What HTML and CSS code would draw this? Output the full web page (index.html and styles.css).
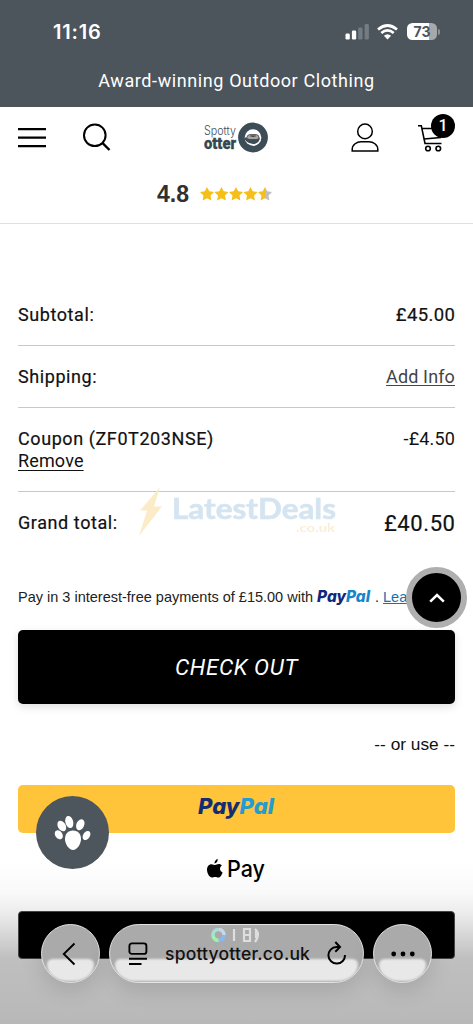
FILE: index.html
```html
<!DOCTYPE html>
<html lang="en">
<head>
<meta charset="utf-8">
<meta name="viewport" content="width=device-width, initial-scale=1">
<title>Spotty Otter - Cart</title>
<link rel="stylesheet" href="styles.css">
</head>
<body>
<div class="screen">
  <div class="status">
    <span class="clock">11:16</span>
    <div class="indicators">
      <svg width="25" height="16" viewBox="0 0 25 16"><g fill="#fff"><rect x="1.500" y="9.500" width="4.3" height="6" rx="1.3"/><rect x="7.900" y="6.500" width="4.3" height="9" rx="1.3"/></g><g fill="#747b82"><rect x="14.200" y="3.500" width="4.3" height="12" rx="1.3"/><rect x="20.600" y="0" width="4.3" height="15.500" rx="1.3"/></g></svg>
      <svg width="21" height="16" viewBox="0 0 21 16" fill="none" stroke="#fff" stroke-width="2.7"><path d="M1 5.5Q10.500-2.500 20 5.500M4.300 9Q10.500 3.800 16.700 9"/><path d="M10.500 15.500L6.900 11.800Q10.500 8.700 14.100 11.800Z" fill="#fff" stroke="none"/></svg>
      <div class="battery"><span>73</span></div>
      <i class="battery-cap"></i>
    </div>
  </div>
  <div class="promo">Award-winning Outdoor Clothing</div>
  <header class="header">
    <nav class="nav">
      <svg class="menu" width="28" height="22" viewBox="0 0 28 22" stroke="#000" stroke-width="2.300"><path d="M0 2.200H28M0 10.700H28M0 19.200H28"/></svg>
      <svg class="search" width="30" height="30" viewBox="0 0 30 30" fill="none" stroke="#000" stroke-width="2"><circle cx="12.800" cy="12.300" r="10.800"/><path d="M20.100 19.700L27.500 27" stroke-width="2.400"/></svg>
      <svg class="logo" width="66" height="34" viewBox="0 0 66 34">
        <text class="logo-thin" x="1" y="13.500" textLength="32" lengthAdjust="spacingAndGlyphs">Spotty</text>
        <text class="logo-bold" x="1" y="28" textLength="32" lengthAdjust="spacingAndGlyphs">otter</text>
        <circle cx="50" cy="16.500" r="14.900" fill="#3d4d58"/>
        <circle cx="50" cy="16.500" r="8.300" fill="#fff"/>
        <path d="M41.500 16.500L58 17Q57 22 52 23.500L46 22Q42 20 41.500 16.500Z" fill="#3d4d58"/>
        <path d="M43.500 17.500Q44 13.500 47 13.500H53Q56 13.500 56.300 17.500Q54 19 50 18.500Q46 19 43.500 17.500Z" fill="#aaa69e" stroke="#303a40" stroke-width=".7"/>
        <path d="M47 15H53M49.300 14.500L50 16L51 14.500" stroke="#293238" stroke-width=".8" fill="none"/>
        <path d="M57.600 17Q57 22.500 50 24.300" stroke="#fff" stroke-width="1.300" fill="none"/>
      </svg>
      <svg class="account" width="28" height="30" viewBox="0 0 28 30" fill="none" stroke="#000" stroke-width="1.500"><circle cx="14" cy="8.400" r="7.300"/><path d="M1.200 28V26.500C1.200 21.500 6 18.700 10 18.700H18C22 18.700 26.800 21.500 26.800 26.500V28Z"/></svg>
      <div class="cart">
        <svg width="28" height="30" viewBox="0 0 28 30" fill="none" stroke="#000" stroke-width="1.600"><path d="M0 2.700H3.300L7 20.500H23.500M4.400 5.500H25L22.500 14.500L6 16"/><circle cx="10" cy="25.500" r="2.300"/><circle cx="20.300" cy="25.500" r="2.300"/></svg>
        <span class="badge">1</span>
      </div>
    </nav>
    <div class="rating">
      <b>4.8</b>
      <svg width="72" height="14" viewBox="0 0 72 14">
        <defs><path id="star" d="M7 0L9.200 4.300L14 5L10.500 8.500L11.400 13.500L7 11.200L2.600 13.500L3.500 8.500L0 5L4.800 4.300Z"/><linearGradient id="half"><stop offset=".5" stop-color="#f5be18"/><stop offset=".5" stop-color="#bfbfc2"/></linearGradient></defs>
        <g fill="#f5be18"><use href="#star"/><use href="#star" x="14.500"/><use href="#star" x="29"/><use href="#star" x="43.500"/></g><use href="#star" x="58" fill="url(#half)"/>
      </svg>
    </div>
  </header>
  <main class="main">
    <div class="row"><span class="label">Subtotal:</span><span class="value">£45.00</span></div>
    <div class="row"><span class="label">Shipping:</span><a class="add">Add Info</a></div>
    <div class="row coupon"><div><span class="label">Coupon (ZF0T203NSE)</span><a class="remove">Remove</a></div><span class="discount">-£4.50</span></div>
    <div class="row total"><span class="label">Grand total:</span><span class="sum">£40.50</span></div>
    <p class="paylater"><span>Pay in 3 interest-free payments of £15.00 with</span>
      <svg class="pp-small" width="54" height="20" viewBox="0 0 54 20"><text class="pp" x="0" y="15" font-size="15.500" textLength="53" lengthAdjust="spacingAndGlyphs"><tspan fill="#10277c">Pay</tspan><tspan fill="#1685cc">Pal</tspan></text></svg>
      <span>.</span><a>Learn</a></p>
    <button class="checkout">CHECK OUT</button>
    <div class="or">-- or use --</div>
    <button class="paypal"><svg width="78" height="30" viewBox="0 0 78 30"><text class="pp" x="0" y="21" font-size="21.500" textLength="76" lengthAdjust="spacingAndGlyphs"><tspan fill="#142c71">Pay</tspan><tspan fill="#259bd0">Pal</tspan></text></svg></button>
    <div class="applepay">
      <svg width="16" height="20" viewBox="0 0 16 20"><path d="M10.700 0C11 2.100 9.500 4.300 7.500 4.500C7.200 2.400 8.900.5 10.700 0ZM14.900 6.600C12.100 8.400 12.500 12.200 15.600 13.400C14.800 15.800 13.200 18.600 11.300 18.600C10.200 18.600 9.700 17.900 8.200 17.900C6.700 17.900 6.100 18.600 5 18.600C2.500 18.600 0 14.400 0 10.800C0 7.300 2.100 5.200 4.500 5.200C6 5.200 7.100 6.100 8.100 6.100C9 6.100 10.200 5.100 12 5.100C13.200 5.100 14.200 5.700 14.900 6.600Z"/></svg>
      <svg width="39" height="32" viewBox="0 0 39 32"><text class="pay" x="0" y="24" textLength="38" lengthAdjust="spacingAndGlyphs">Pay</text></svg>
    </div>
    <div class="gpay"></div>
  </main>

  <svg class="watermark" width="204" height="56" viewBox="0 0 204 56"><path d="M24 1L4 24.500H11L3 50L26 20.500H18Z" fill="#fbeac0"/><text class="wm-name" x="36" y="33" textLength="164" lengthAdjust="spacingAndGlyphs">LatestDeals</text><text class="wm-tld" x="160" y="46" textLength="39" lengthAdjust="spacingAndGlyphs">.co.uk</text></svg>
  <div class="totop"><svg width="16" height="10" viewBox="0 0 16 10" fill="none" stroke="#fff" stroke-width="2.500"><path d="M1.200 8.700L8 2L14.800 8.700"/></svg></div>
  <div class="paw"><svg width="38" height="36" viewBox="0 0 38 36" fill="#fff"><path d="M19 15.500C24 15.500 27 19 27 24C27 29 23 35 19 35C15 35 11 29 11 24C11 19 14 15.500 19 15.500Z"/><ellipse cx="4.800" cy="19.800" rx="3.600" ry="4.900" transform="rotate(-35 4.800 19.800)"/><ellipse cx="7.800" cy="11" rx="3.900" ry="5.700" transform="rotate(-30 7.800 11)"/><ellipse cx="15.300" cy="7" rx="3.900" ry="6.200" transform="rotate(-15 15.300 7)"/><ellipse cx="26.300" cy="9.700" rx="3.900" ry="5.700" transform="rotate(24 26.300 9.700)"/><ellipse cx="32.500" cy="20.500" rx="3.400" ry="5" transform="rotate(32 32.500 20.500)"/></svg></div>

  <div class="shade"></div>
  <div class="toolbar">
    <div class="glass round"><svg width="14" height="24" viewBox="0 0 14 24" fill="none" stroke="#000" stroke-width="1.900"><path d="M12.500 1.500L1.800 12L12.500 22.500"/></svg></div>
    <div class="glass pill">
      <svg class="reader" width="20" height="24" viewBox="0 0 20 24" fill="none" stroke="#000" stroke-width="1.900"><rect x="1.400" y="1.400" width="17" height="10.500" rx="2.500"/><path d="M1 16.800H19M1 22H13.500"/></svg>
      <span class="url">spottyotter.co.uk</span>
      <svg class="reload" width="20" height="24" viewBox="0 0 20 24" fill="none" stroke="#000" stroke-width="2"><path d="M12.500 6H9.500A8.300 8.300 0 1 0 18 14M8.300 1L13 6L8.300 10.700"/></svg>
      <svg class="gmark" width="54" height="20" viewBox="0 0 54 20"><g fill="none" stroke-width="3.600"><path d="M4 10A5.500 5.500 0 0 1 9.500 4.500" stroke="#a2e3d6"/><path d="M9.500 4.500A5.500 5.500 0 0 1 15 10" stroke="#c9d7ea"/><path d="M15 10A5.500 5.500 0 0 1 9.500 15.500" stroke="#8ab8f2"/><path d="M9.500 15.500A5.500 5.500 0 0 1 4 10" stroke="#a3efb0"/></g><g fill="none" stroke="#dedede" stroke-width="2.200"><path d="M25 4V16M35 4H41V16H35ZM35 10H41M46 4Q52 9 46 17M47 4V13"/></g></svg>
    </div>
    <div class="glass round"><svg width="24" height="6" viewBox="0 0 24 6"><circle cx="2.700" cy="3" r="2.400"/><circle cx="12" cy="3" r="2.400"/><circle cx="21.300" cy="3" r="2.400"/></svg></div>
  </div>
</div>
</body>
</html>
```
FILE: styles.css
```css
* { box-sizing: border-box; }
body { margin: 0; background: #fff; color: #111; font-family: Roboto, "Liberation Sans", sans-serif; }
button { border: 0; padding: 0; font: inherit; display: flex; align-items: center; justify-content: center; width: 100%; }
svg { display: block; flex: none; overflow: visible; }
.screen { position: relative; width: 473px; height: 1024px; overflow: hidden; }

.status { height: 57px; background: #4d555c; display: flex; justify-content: space-between; padding: 6px 33px 0 53px; align-items: center; color: #fff; }
.clock { font: 600 20px/24px Inter, sans-serif; letter-spacing: .8px; }
.indicators { display: flex; align-items: center; }
.indicators svg + svg { margin-left: 8px; }
.battery { margin-left: 9px; width: 30px; height: 17px; border-radius: 5.500px; background: linear-gradient(90deg, #fff 73%, #a4a9ad 73%); color: #4d555c; font: 700 14px/17px Inter, sans-serif; text-align: center; }
.battery-cap { width: 2px; height: 6px; margin-left: 1px; border-radius: 0 2px 2px 0; background: #8c9297; }
.promo { height: 50px; background: #4d555c; color: #fff; font-size: 18px; line-height: 48px; letter-spacing: .6px; text-align: center; }

.header { height: 117px; border-bottom: 1px solid #dfdfdf; }
.nav { height: 61px; display: flex; align-items: center; padding: 0 27px 0 18px; }
.search { margin-left: 36px; }
.logo { margin-left: 91px; }
.logo-thin { font: 300 12.500px Inter, sans-serif; fill: #3d4d58; }
.logo-bold { font: 900 17px Roboto, sans-serif; fill: #344752; stroke: #344752; stroke-width: .3px; }
.account { margin-left: 82px; }
.cart { position: relative; margin-left: 39px; }
.badge { position: absolute; left: 13px; top: -9px; width: 24px; height: 24px; border-radius: 50%; background: #000; color: #fff; font: 500 16px/24px Roboto, sans-serif; text-align: center; }
.rating { display: flex; align-items: center; height: 51px; padding-left: 157px; gap: 11px; }
.rating b { font: 700 23px/26px "Liberation Sans", sans-serif; color: #303030; }

.main { padding: 60px 18px 0; }
.row { height: 62px; display: flex; justify-content: space-between; align-items: center; border-bottom: 1px solid #c8c8c8; font-size: 18px; line-height: 22px; }
.label { font-weight: 450; letter-spacing: .58px; display: block; -webkit-text-stroke: .2px #111; }
.value { font-weight: 450; font-size: 18.500px; letter-spacing: .4px; margin-right: -.4px; -webkit-text-stroke: .2px #111; }
.add { text-decoration: underline; color: #444; text-underline-offset: 2px; letter-spacing: .13px; }
.coupon { height: 84px; align-items: flex-start; padding-top: 20px; }
.remove { display: block; text-decoration: underline; text-underline-offset: 3px; letter-spacing: .15px; }
.discount { letter-spacing: .15px; }
.total { border-bottom: 0; }
.sum { font-size: 22px; line-height: 26px; padding-top: 1px; font-weight: 450; letter-spacing: .6px; margin-right: -.6px; -webkit-text-stroke: .2px #111; }
.paylater { margin: 32px 0 23px; height: 21px; display: flex; align-items: center; white-space: nowrap; font: 14.500px/20px "Liberation Sans", sans-serif; color: #222; }
.pp-small { margin: 0 4px; }
.paylater a { margin-left: 4px; color: #1273ad; text-decoration: underline; }
.pp { font-family: Inter, sans-serif; font-weight: 800; font-style: italic; }
.checkout { height: 74px; border-radius: 5px; background: #000; color: #fff; font-size: 22.500px; line-height: 26px; font-style: italic; letter-spacing: .6px; padding-bottom: 1px; box-shadow: 0 3px 9px rgba(0,0,0,.13); }
.or { height: 81px; text-align: right; font: 17.300px/81px "Liberation Sans", sans-serif; }
.paypal { height: 48px; border-radius: 5px; background: #ffc439; padding-bottom: 2px; }
.applepay { height: 78px; display: flex; align-items: center; justify-content: center; gap: 4px; padding-bottom: 7px; }
.pay { font: 500 22.500px Inter, sans-serif; }
.gpay { position: relative; z-index: 2; height: 48px; background: #000; border: 1px solid #444; border-radius: 4px; }

.watermark { position: absolute; left: 136px; top: 486px; opacity: .88; }
.wm-name { font: 700 29px Lato, sans-serif; fill: #cfe1ee; stroke: #cfe1ee; stroke-width: .6px; }
.wm-tld { font: 700 12px Lato, sans-serif; fill: #fbecd0; }
.totop { position: absolute; left: 406px; top: 567px; width: 61px; height: 61px; border: 6px solid #afafaf; border-radius: 50%; background: #000; display: grid; place-items: center; }
.paw { position: absolute; left: 36px; top: 796px; width: 73px; height: 73px; border-radius: 50%; background: #4d565d; display: grid; place-items: center; }
.shade { position: absolute; z-index: 1; left: 0; right: 0; bottom: 0; height: 164px; background: linear-gradient(rgba(0,0,0,0), rgba(0,0,0,.025) 20%, rgba(0,0,0,.08) 33%, rgba(0,0,0,.25) 60%, rgba(0,0,0,.28)); }
.toolbar { position: absolute; z-index: 3; left: 41px; top: 924px; width: 391px; height: 59px; display: flex; justify-content: space-between; }
.glass { position: relative; overflow: hidden; height: 59px; border: 1.500px solid #e3e3e3; background: #aaa; display: flex; align-items: center; justify-content: center; box-shadow: 0 7px 22px rgba(0,0,0,.13); }
.glass::before { content: ""; position: absolute; left: 5px; right: 5px; top: 34px; bottom: 1px; border-radius: 7px 7px 26px 26px / 7px 7px 22px 22px; background: #e8e8e8; filter: blur(1px); }
.glass > * { position: relative; }
.round { width: 59px; border-radius: 50%; }
.round svg { margin-left: -3px; }
.round:last-child svg { margin-left: 0; }
.pill { width: 255px; border-radius: 30px; justify-content: flex-start; padding-left: 18px; }
.url { margin-left: 17px; width: 145px; font: 500 17.500px/24px Inter, sans-serif; letter-spacing: .2px; white-space: nowrap; }
.reload { margin-left: 17px; top: -1px; }
.glass .gmark { position: absolute; left: 99px; top: 0; filter: blur(.7px); }
```
